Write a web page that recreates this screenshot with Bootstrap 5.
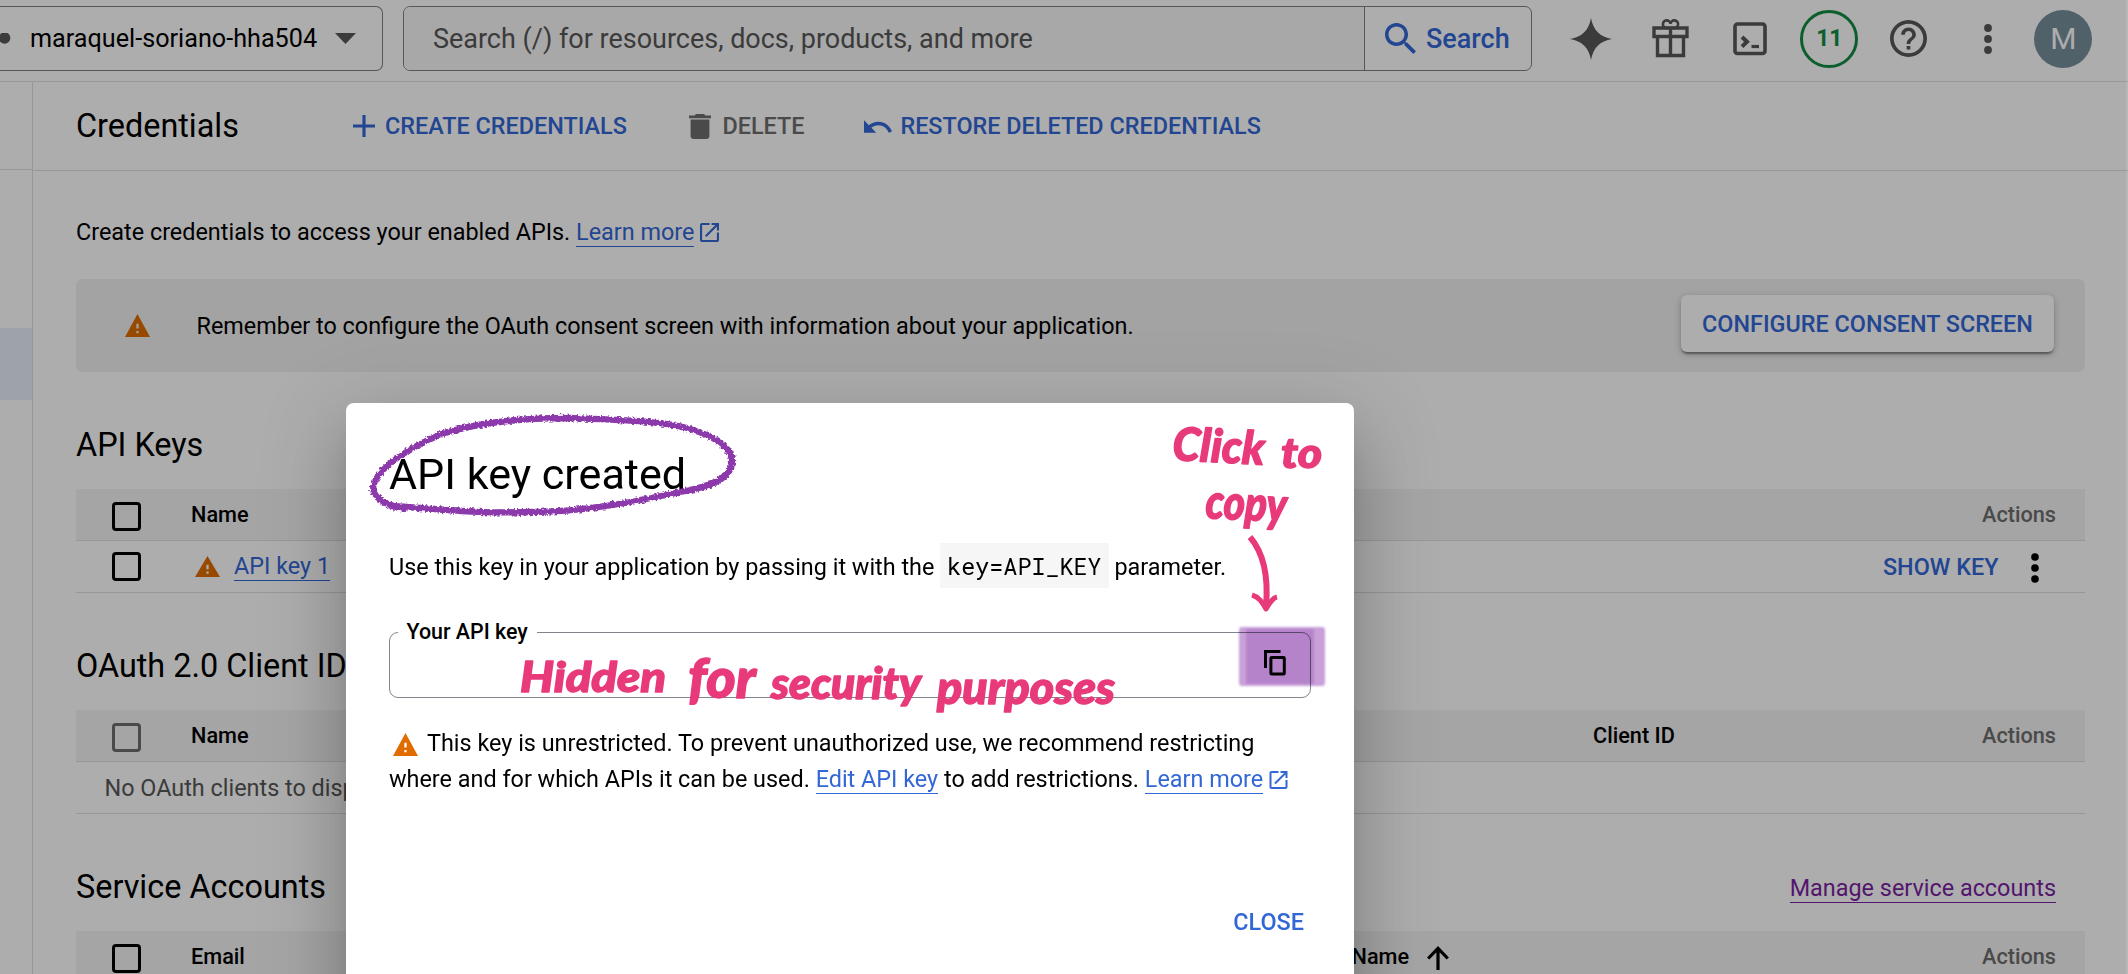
<!DOCTYPE html>
<html lang="en">
<head>
<meta charset="utf-8">
<title>Credentials</title>
<link href="https://cdn.jsdelivr.net/npm/bootstrap@5.3.0/dist/css/bootstrap.min.css" rel="stylesheet">
<script src="https://cdn.jsdelivr.net/npm/bootstrap@5.3.0/dist/js/bootstrap.bundle.min.js"></script>
<style>
html,body{height:100%;overflow:hidden}
body{font-family:Roboto,sans-serif;font-size:23.4px;line-height:36px;color:#000;background:#fff}
svg{display:block;flex:none}
.topbar{height:82px;border-bottom:1px solid #dfdfdf;padding-top:6px}
.field{height:65px;border:1.5px solid #808080}
.project{width:383px;border-left:0;border-radius:0 7px 7px 0;font-size:25.2px}
.searchbox{margin-left:20px;width:1129px;border-radius:7px;font-size:26.97px;overflow:hidden}
.searchbox .query{width:961px;padding-left:29px;background:#f8f8f8;color:#575757;border-right:1.5px solid #808080}
.blue{color:#3367d6}
.strong{font-weight:500}
.tools{height:65px;margin-left:19.5px;color:#575757}
.tool{width:79.4px}
.round{width:58px;height:58px;border-radius:50%}
.trial{border:3.5px solid #148b43;color:#148b43;font-size:23px;font-weight:700}
.avatar{background:#78909c;color:#fff;font-size:30px;margin-left:6.5px}
.side{width:33px;border-right:1px solid #dfdfdf}
.side-head{height:88px;border-bottom:1px solid #dfdfdf}
.side-on{margin-top:158px;height:72px;background:#e8effc}
.actionbar{height:89px;border-bottom:1px solid #dfdfdf;padding-left:43px}
h1,h2,h3{margin:0;font-weight:400}
.actionbar h1{font-size:32.4px;width:276.5px}
.off{color:#6e6e6e}
.page{padding:43px 43px 0}
.lnk{color:#3367d6;text-decoration:none;border-bottom:1.5px solid currentColor}
.lnk.seen{color:#7b1fa2}
.ext{display:inline-block;margin-left:6px;vertical-align:-2px}
.notice{height:93px;margin:29px 0 0;background:#f0f0f0;border-radius:7px;padding:0 31px 0 49px}
.configure{width:373px;height:57px;border-radius:6px;background:#fff;box-shadow:0 3px 2px -1px rgba(0,0,0,.35),0 2px 6px rgba(0,0,0,.25);margin-bottom:4px}
.sect{height:117px;padding-top:29px}
.sect h2{font-size:32.4px}
.trow{height:52px;border-bottom:1px solid #dfdfdf;padding:0 29px 0 36px}
.thead-row{background:#f3f3f3;font-size:21.7px;font-weight:500}
.tick{width:29px;height:29px;border:3px solid #000;border-radius:4px;margin-right:50px}
.thead-row .tick{margin-top:4px}
.tick.off{border-color:#6e6e6e}
.shade{position:fixed;inset:0;background:rgba(0,0,0,.32);box-shadow:inset -2px 0 rgba(255,255,255,.12)}
.dlg{width:1008px;max-width:none;margin:403px 0 0 346px}
.dlg .modal-content{height:650px;border:0;border-radius:8px;padding:50px 43px 0;color:#000;box-shadow:0 20px 27px -13px rgba(0,0,0,.2),0 43px 68px 5px rgba(0,0,0,.14),0 16px 83px 14px rgba(0,0,0,.12)}
.dlg h3{font-size:43.1px;line-height:44px}
.keycode{font-family:"Roboto Mono","DejaVu Sans Mono",monospace;font-size:23.4px;color:#000;background:#f6f6f6;padding:7px 7px 7px}
.use{margin:51px 0 0}
.keyfield{position:relative;width:922px;height:66px;margin-top:47px;border:1.5px solid #80868b;border-radius:9px}
.keyfield label{position:absolute;left:7.5px;top:-19px;padding:0 9px;background:#fff;font-size:21.4px;font-weight:500}
.keyfield svg{position:absolute;right:24px;top:17px}
.restrict{margin:27px 0 0}
.restrict .warn{display:inline-block;margin:0 9px 0 4px;vertical-align:-5px}
.closer{margin:107px 7px 0 0}
.notes{position:absolute;left:0;top:0}
.notes text{font-family:Lato,sans-serif;font-weight:900;font-style:italic;fill:#e83a7b;stroke:#e83a7b;stroke-width:1.4;stroke-linejoin:round}
</style>
</head>
<body>
<svg width="0" height="0" class="position-absolute" aria-hidden="true">
<symbol id="i-warn" viewBox="1 2 22 19" preserveAspectRatio="none"><path d="M1 21h22L12 2 1 21zm12-3h-2v-2h2v2zm0-4h-2v-4h2v4z"/></symbol>
<symbol id="i-ext" viewBox="3 3 18 18"><path d="M19 19H5V5h7V3H5c-1.11 0-2 .9-2 2v14c0 1.1.89 2 2 2h14c1.1 0 2-.9 2-2v-7h-2v7zM14 3v2h3.59l-9.83 9.83 1.41 1.41L19 6.41V10h2V3h-7z"/></symbol>
</svg>

<header class="topbar d-flex">
  <div class="field project d-flex align-items-center">
    <svg width="11" height="12"><circle cx="4.6" cy="5" r="5.8" fill="#575757"/></svg>
    <span style="margin-left:19px">maraquel-soriano-hha504</span>
    <svg class="ms-auto" style="margin-right:26px" width="21" height="11"><path d="M0 0h21L10.500 11z" fill="#575757"/></svg>
  </div>
  <div class="field searchbox d-flex">
    <div class="query d-flex align-items-center">Search (/) for resources, docs, products, and more</div>
    <div class="d-flex align-items-center flex-grow-1 blue strong" style="padding-left:20px">
      <svg width="31" height="31" viewBox="3 3 17.5 17.5" fill="currentColor"><path d="M15.500 14h-.79l-.28-.27C15.410 12.590 16 11.110 16 9.500 16 5.910 13.090 3 9.500 3S3 5.910 3 9.500 5.910 16 9.500 16c1.610 0 3.090-.59 4.230-1.570l.27.28v.79l5 4.990L20.490 19l-4.990-5zm-6 0C7.010 14 5 11.990 5 9.500S7.010 5 9.500 5 14 7.010 14 9.500 11.990 14 9.500 14z"/></svg>
      <span style="margin-left:10px">Search</span>
    </div>
  </div>
  <div class="tools d-flex align-items-center">
    <div class="tool d-flex justify-content-center"><svg width="42" height="42" viewBox="0 0 42 42" fill="currentColor"><path d="M21 0C23 12 30 19 42 21C30 23 23 30 21 42C19 30 12 23 0 21C12 19 19 12 21 0z"/></svg></div>
    <div class="tool d-flex justify-content-center"><svg width="37" height="39" viewBox="0 0 37 39" fill="none" stroke="currentColor" stroke-width="3.400"><path d="M2 9h33v8.500H2zM5.500 17.500V36.500h26V17.500M18.500 9v27.500"/><path d="M18.300 9H15a3.800 3.800 0 1 1 3.500-4A3.800 3.800 0 1 1 22 9z" stroke-width="2.600"/></svg></div>
    <div class="tool d-flex justify-content-center"><svg width="34" height="34" viewBox="0 0 34 34" fill="none" stroke="currentColor"><rect x="2" y="2" width="30" height="29.500" rx="2.500" stroke-width="3.600"/><path d="M9 15l5 4.800-5 4.800" stroke-width="4"/><path d="M18.500 24.500H26" stroke-width="3.200"/></svg></div>
    <div class="tool d-flex justify-content-center"><div class="round trial d-flex align-items-center justify-content-center">11</div></div>
    <div class="tool d-flex justify-content-center"><svg width="37" height="37" viewBox="2 2 20 20" fill="currentColor"><path d="M11 18h2v-2h-2v2zm1-16C6.480 2 2 6.480 2 12s4.480 10 10 10 10-4.480 10-10S17.520 2 12 2zm0 18c-4.410 0-8-3.590-8-8s3.590-8 8-8 8 3.590 8 8-3.590 8-8 8zm0-14c-2.210 0-4 1.790-4 4h2c0-1.100.9-2 2-2s2 .9 2 2c0 2-3 1.750-3 5h2c0-2.250 3-2.500 3-5 0-2.210-1.790-4-4-4z"/></svg></div>
    <div class="tool d-flex justify-content-center"><svg width="8" height="30" fill="currentColor"><circle cx="4" cy="4" r="3.900"/><circle cx="4" cy="15" r="3.900"/><circle cx="4" cy="26" r="3.900"/></svg></div>
    <div class="round avatar d-flex align-items-center justify-content-center">M</div>
  </div>
</header>

<div class="d-flex" style="height:893px">
  <nav class="side flex-shrink-0"><div class="side-head"></div><div class="side-on"></div></nav>
  <main class="flex-grow-1">
    <div class="actionbar d-flex align-items-center strong blue">
      <h1 class="text-black">Credentials</h1>
      <svg width="22" height="22" viewBox="5 5 14 14" fill="currentColor"><path d="M19 13h-6v6h-2v-6H5v-2h6V5h2v6h6v2z"/></svg>
      <span style="margin-left:10.500px">CREATE CREDENTIALS</span>
      <span class="off d-flex align-items-center" style="margin-left:62.500px"><svg width="22" height="25" viewBox="5 3 14 18" preserveAspectRatio="none" fill="currentColor"><path d="M6 19c0 1.100.9 2 2 2h8c1.100 0 2-.9 2-2V7H6v12zM19 4h-3.500l-1-1h-5l-1 1H5v2h14V4z"/></svg><span style="margin-left:11px">DELETE</span></span>
      <svg style="margin-left:60px" width="28" height="13" viewBox="2 7 20.500 9" fill="currentColor"><path d="M12.500 8c-2.650 0-5.050.99-6.900 2.600L2 7v9h9l-3.620-3.620c1.390-1.160 3.160-1.880 5.120-1.880 3.540 0 6.550 2.310 7.600 5.500l2.370-.78C21.080 11.030 17.150 8 12.500 8z"/></svg>
      <span style="margin-left:8px">RESTORE DELETED CREDENTIALS</span>
    </div>
    <div class="page">
      <p class="m-0">Create credentials to access your enabled APIs. <a class="lnk" href="#">Learn more</a><svg class="ext blue" width="19" height="19" fill="currentColor"><use href="#i-ext"/></svg></p>
      <div class="notice d-flex align-items-center">
        <svg width="25" height="23" fill="#e06c00"><use href="#i-warn"/></svg>
        <span style="margin-left:46.500px">Remember to configure the OAuth consent screen with information about your application.</span>
        <div class="configure ms-auto d-flex align-items-center justify-content-center strong blue">CONFIGURE CONSENT SCREEN</div>
      </div>

      <div class="sect d-flex align-items-center"><h2>API Keys</h2></div>
      <div class="trow thead-row d-flex align-items-center"><span class="tick"></span>Name<span class="ms-auto off">Actions</span></div>
      <div class="trow d-flex align-items-center"><span class="tick"></span><svg style="margin-left:4px;margin-right:14px" width="25" height="21" fill="#e06c00"><use href="#i-warn"/></svg><a class="lnk" href="#" style="line-height:27px">API key 1</a><span class="ms-auto strong blue">SHOW KEY</span><svg style="margin:3px 17px 0 32.500px" width="8" height="30"><circle cx="4" cy="4" r="3.800"/><circle cx="4" cy="15" r="3.800"/><circle cx="4" cy="26" r="3.800"/></svg></div>

      <div class="sect d-flex align-items-center"><h2>OAuth 2.0 Client IDs</h2></div>
      <div class="trow thead-row d-flex align-items-center"><span class="tick off"></span>Name<span class="ms-auto" style="width:389px">Client ID</span><span class="off">Actions</span></div>
      <div class="trow d-flex align-items-center" style="padding-left:28.500px;color:#575757">No OAuth clients to display</div>

      <div class="sect d-flex align-items-center"><h2>Service Accounts</h2><a class="lnk seen ms-auto" href="#" style="margin:3px 29px 0 0;line-height:27px">Manage service accounts</a></div>
      <div class="trow thead-row d-flex align-items-center"><span class="tick"></span>Email<span class="ms-auto d-flex align-items-center" style="width:630.500px">Name<svg style="margin:3px 0 0 18px" width="22" height="24" viewBox="0 0 22 24" fill="none" stroke="#000" stroke-width="3.200"><path d="M11 24V2.500M1.200 12.500L11 2.400l9.800 10.100"/></svg></span><span class="off">Actions</span></div>
    </div>
  </main>
</div>

<div class="shade"></div>
<div class="modal d-block overflow-hidden" tabindex="-1">
  <div class="modal-dialog dlg">
    <div class="modal-content">
      <h3>API key created</h3>
      <p class="use text-nowrap">Use this key in your application by passing it with the <code class="keycode">key=API_KEY</code> parameter.</p>
      <div class="keyfield"><label>Your API key</label>
        <svg width="22" height="26" viewBox="0 0 22 26" fill="none" stroke="#000" stroke-width="3"><path d="M16.500 1.500H1.500V18"/><rect x="6.900" y="7.500" width="13.400" height="16.500" rx=".8"/></svg>
      </div>
      <p class="restrict text-nowrap"><svg class="warn" width="25" height="23" fill="#e06c00"><use href="#i-warn"/></svg>This key is unrestricted. To prevent unauthorized use, we recommend restricting<br>where and for which APIs it can be used. <a class="lnk" href="#">Edit API key</a> to add restrictions. <a class="lnk" href="#">Learn more</a><svg class="ext blue" width="19" height="18" fill="currentColor"><use href="#i-ext"/></svg></p>
      <div class="closer text-end strong blue">CLOSE</div>

      <!-- hand-drawn notes laid over the dialog -->
      <svg class="notes" width="1008" height="314" viewBox="346 403 1008 314" fill="none">
        <defs>
          <filter id="chalk" x="-5%" y="-10%" width="110%" height="120%"><feTurbulence type="fractalNoise" baseFrequency=".4" numOctaves="2" seed="4"/><feDisplacementMap in="SourceGraphic" scale="5" xChannelSelector="R" yChannelSelector="G"/></filter>
          <filter id="soft" x="-5%" y="-5%" width="110%" height="110%"><feGaussianBlur stdDeviation="1.300"/></filter>
        </defs>
        <path filter="url(#chalk)" stroke="#8227a5" stroke-opacity=".92" stroke-width="6.300" stroke-linecap="round" d="M404 509C390 506 373 500 373 487C376 471 398 454 436 436C475 422 525 418 570 418C625 420 665 421 690 429C718 437 734 451 732 463C730 479 710 487 680 492C630 503 580 512 530 512C480 514 440 509 392 506"/>
        <g style="mix-blend-mode:multiply" filter="url(#soft)"><rect x="1239" y="627" width="86" height="59" rx="3" fill="#c9a0d9"/><rect x="1246" y="629" width="68" height="55" fill="#b07cc6" opacity=".8"/></g>
        <text x="520" y="692" font-size="42" textLength="146" lengthAdjust="spacingAndGlyphs">Hidden</text>
        <text x="688" y="698" font-size="56" textLength="68" lengthAdjust="spacingAndGlyphs">for</text>
        <text x="771" y="699" font-size="43" textLength="150" lengthAdjust="spacingAndGlyphs">security</text>
        <text x="937" y="704" font-size="46" textLength="178" lengthAdjust="spacingAndGlyphs">purposes</text>
        <text transform="translate(1172 460) rotate(3)" x="0" y="0" font-size="46" textLength="92" lengthAdjust="spacingAndGlyphs">Click</text>
        <text x="1281" y="468" font-size="42" textLength="41" lengthAdjust="spacingAndGlyphs">to</text>
        <text transform="translate(1205 518) rotate(3)" x="0" y="0" font-size="48" textLength="81" lengthAdjust="spacingAndGlyphs">copy</text>
        <g stroke="#e83a7b" stroke-linejoin="round"><path stroke-width="6" d="M1250 537C1261 550 1269 572 1266 606"/><path stroke-width="5" d="M1252 595C1259 597 1262 602 1266 609C1269 604 1272 598 1277 597"/></g>
      </svg>
    </div>
  </div>
</div>
</body>
</html>
